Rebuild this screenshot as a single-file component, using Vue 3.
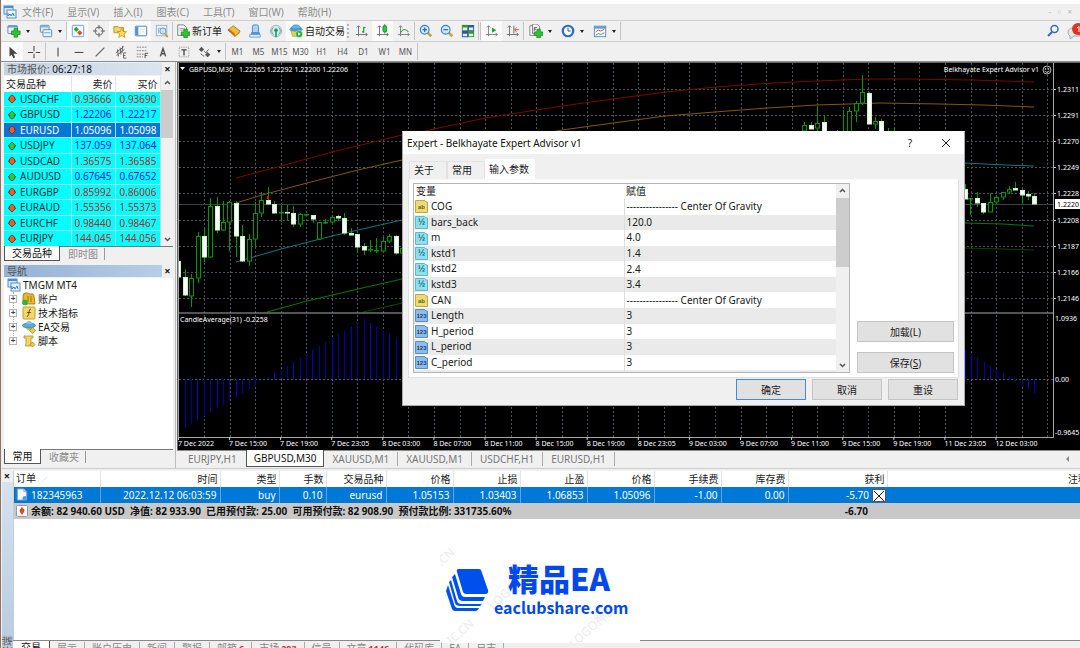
<script setup>
const menus = ['文件(F)', '显示(V)', '插入(I)', '图表(C)', '工具(T)', '窗口(W)', '帮助(H)']
const mainTools = [
  { i: 'newchart', drop: true }, { i: 'profiles', drop: true }, { sep: true },
  { i: 'market', on: true }, { i: 'cross' }, { i: 'star', on: true }, { i: 'navi', on: true }, { i: 'tester' }, { sep: true },
  { i: 'order', label: '新订单' }, { i: 'gold' }, { i: 'vps' }, { i: 'signal' },
  { i: 'auto', label: '自动交易', on: true }, { grip: true },
  { i: 'bars' }, { i: 'candles', on: true }, { i: 'line' }, { sep: true },
  { i: 'zoomin' }, { i: 'zoomout' }, { i: 'tile' }, { sep: true }, { sep: true },
  { i: 'scroll', on: true }, { i: 'shift' }, { sep: true },
  { i: 'indi', drop: true }, { i: 'clock', drop: true }, { i: 'template', drop: true }
]
const lineTools = [
  { i: 'cursor', on: true }, { i: 'plus' }, { sep: true }, { i: 'vline' }, { i: 'hline' }, { i: 'diag' },
  { i: 'channel' }, { i: 'fibo' }, { i: 'texta' }, { i: 'textt' }, { i: 'arrows', drop: true }
]
const frames = ['M1', 'M5', 'M15', 'M30', 'H1', 'H4', 'D1', 'W1', 'MN']
const quotes = [
  ['USDCHF', '0.93666', '0.93690', 0], ['GBPUSD', '1.22206', '1.22217', 1],
  ['EURUSD', '1.05096', '1.05098', 0], ['USDJPY', '137.059', '137.064', 1],
  ['USDCAD', '1.36575', '1.36585', 0], ['AUDUSD', '0.67645', '0.67652', 1],
  ['EURGBP', '0.85992', '0.86006', 0], ['EURAUD', '1.55356', '1.55373', 0],
  ['EURCHF', '0.98440', '0.98467', 0], ['EURJPY', '144.045', '144.056', 0]
]
const tree = [['acc', '账户'], ['func', '技术指标'], ['ea', 'EA交易'], ['script', '脚本']]
const chartTabs = ['EURJPY,H1', 'GBPUSD,M30', 'XAUUSD,M1', 'XAUUSD,M1', 'USDCHF,H1', 'EURUSD,H1']
const params = [
  ['ab', 'COG', '---------------- Center Of Gravity'], ['v2', 'bars_back', '120.0'], ['v2', 'm', '4.0'],
  ['v2', 'kstd1', '1.4'], ['v2', 'kstd2', '2.4'], ['v2', 'kstd3', '3.4'],
  ['ab', 'CAN', '---------------- Center Of Gravity'], ['n3', 'Length', '3'], ['n3', 'H_period', '3'],
  ['n3', 'L_period', '3'], ['n3', 'C_period', '3'], ['ab', '', '']
]
const glyphs = { ab: 'ab', v2: '½', n3: '123' }
const heads = ['订单', '时间', '类型', '手数', '交易品种', '价格', '止损', '止盈', '价格', '手续费', '库存费', '获利', '注释']
const order = ['182345963', '2022.12.12 06:03:59', 'buy', '0.10', 'eurusd', '1.05153', '1.03403', '1.06853', '1.05096', '-1.00', '0.00', '-5.70']
const bottomTabs = [['交易'], ['展示'], ['账户历史'], ['新闻'], ['警报'], ['邮箱', '6'], ['市场', '203'], ['信号'], ['文章', '1146'], ['代码库'], ['EA'], ['日志']]

const gridX = Array.from({ length: 34 }, (_, k) => Math.round(204 + 25.55 * k) + 0.5)
const gridY = Array.from({ length: 9 }, (_, k) => Math.round(89 + 26.1 * k) + 0.5)
const prices = ['1.2311', '1.2291', '1.2270', '1.2249', '1.2228', '1.2208', '1.2187', '1.2166', '1.2146']
const times = ['7 Dec 2022', '7 Dec 15:00', '7 Dec 19:00', '7 Dec 23:05', '8 Dec 03:00', '8 Dec 07:00', '8 Dec 11:00', '8 Dec 15:00', '8 Dec 19:00', '8 Dec 23:05', '9 Dec 03:00', '9 Dec 07:00', '9 Dec 11:00', '9 Dec 15:00', '9 Dec 19:00', '11 Dec 23:05', '12 Dec 03:00']

// high, body top, body bottom, low, falling
const early = [
  [560, 602, 652, 660, 1], [628, 652, 706, 708, 1], [642, 654, 709, 740, 0], [516, 527, 655, 668, 0], [502, 528, 590, 606, 1],
  [414, 437, 590, 590, 0], [412, 437, 511, 520, 1], [424, 486, 511, 514, 0], [424, 426, 486, 572, 0], [422, 428, 527, 592, 1],
  [495, 527, 602, 606, 1], [522, 538, 602, 617, 0], [427, 460, 538, 562, 0], [397, 420, 460, 470, 0], [380, 420, 433, 435, 1],
  [423, 433, 459, 463, 1], [434, 455, 459, 486, 0], [435, 455, 460, 479, 1], [439, 460, 492, 502, 1], [460, 463, 493, 500, 0],
  [461, 463, 466, 469, 0], [465, 465, 477, 490, 1], [486, 487, 538, 540, 0], [478, 485, 488, 493, 0], [464, 470, 487, 488, 0],
  [465, 469, 475, 482, 1], [459, 474, 520, 525, 1], [505, 519, 524, 526, 1], [522, 523, 560, 580, 1], [549, 559, 569, 585, 1],
  [540, 567, 570, 575, 0], [533, 569, 572, 579, 0], [530, 542, 572, 579, 0], [523, 529, 542, 549, 0], [526, 528, 580, 586, 1],
  [560, 565, 580, 582, 0]
].map((c, i) => [10 + 19.17 * i - 1545, ...c])
const late = [
  [343, 186, 196, 212, 216, 0], [362, 185, 196, 207, 208, 1], [382, 137, 190, 205, 212, 0], [401, 166, 187, 216, 220, 1],
  [441, 209, 214, 216, 220, 0], [459, 150, 214, 216, 220, 0], [478, 140, 152, 216, 220, 0], [497, 122, 128, 152, 186, 0],
  [517, 46, 97, 130, 135, 0], [536, 96, 98, 191, 192, 1], [555, 172, 182, 192, 207, 0], [574, 178, 182, 216, 220, 1],
  [593, 204, 214, 216, 220, 0], [612, 205, 214, 216, 220, 0], [824, 372, 387, 416, 418, 1], [841, 414, 414, 416, 465, 0],
  [861, 396, 415, 430, 441, 1], [880, 429, 429, 455, 462, 1], [900, 399, 427, 455, 456, 0], [919, 407, 412, 427, 433, 0],
  [938, 397, 397, 412, 419, 0], [957, 378, 388, 397, 403, 0], [976, 366, 385, 390, 391, 1], [995, 386, 389, 404, 430, 1],
  [1014, 394, 403, 408, 421, 1], [1033, 400, 409, 432, 433, 1]
]
const candles = [...early, ...late].map(([x, h, t, b, l, f]) => {
  const y = v => Math.round(60 + v / 3)
  return { x: Math.round(690 + x / 3), h: y(h), t: y(t), b: Math.max(y(b), y(t) + 1), l: y(l), f }
})
const hist = [
  ...[395, 383, 371, 359, 348, 335, 324, 314, 302, 291, 278, 266, 254, 244, 232, 220, 209, 197, 185, 173, 162, 150, 138, 127, 115, 103, 93, 81, 69, 57, 69, 81, 92, 103, 115]
    .map((v, i) => [Math.round(178.3 + 6.39 * i), 300 + v / 3]),
  ...[270, 282, 293, 305, 317, 328, 340, 351, 364, 375, 387, 399].map((v, i) => [Math.round(964.6 + 6.34 * i), 260 + v / 3])
]
const curves = [
  ['#7c0606', '236,178 281,166 332,152 402,135 425,131 485,118 562,106 613,99 665,92 716,87 773,83 817,81 868,79 907,79 973,80 1034,82'],
  ['#875706', '236,203 262,195 307,183 358,170 402,160 562,130 613,123 665,116 715,112 767,108 817,105 880,103 940,104 983,105 1034,107'],
  ['#0a7a80', '236,262 281,249 332,236 402,220'], ['#0a7a80', '964,163 1005,165 1034,166'],
  ['#067806', '267,312 307,301 358,289 402,279'], ['#067806', '964,223 1003,224 1034,226'],
  ['#064806', '363,312 402,303'], ['#064806', '964,248 1003,249 1034,250']
]
</script>

<template>
  <div class="app">
    <svg class="sprite" aria-hidden="true">
      <symbol id="logo" viewBox="0 0 14 14"><rect x="1" y="1" width="9" height="8" fill="#d4e9fb" stroke="#4d8fca" /><path d="M1 2h9" stroke="#4d8fca" stroke-width="2" /><rect x="4" y="5" width="9" height="8" fill="#eaf5ff" stroke="#4d8fca" /><path d="M5 8v3l2-2 1 2 2-3 1 3" fill="none" stroke="#3a78bb" /></symbol>
      <symbol id="newchart" viewBox="0 0 16 16"><rect x="1" y="2" width="11" height="9" rx="1" fill="#e6f2fb" stroke="#4f7fae" /><path d="M1 3h11" stroke="#5c9bd5" stroke-width="2" /><path d="M8 5h4v3h3v4h-3v3H8v-3H5V8h3z" fill="#2fc42f" stroke="#14861a" stroke-width=".8" /></symbol>
      <symbol id="profiles" viewBox="0 0 16 16"><rect x="1.500" y="1.500" width="10" height="8" rx="1" fill="#deeefc" stroke="#4f83b8" /><path d="M2 3h9" stroke="#7eb3e3" stroke-width="2" /><rect x="4.500" y="6.500" width="10" height="8" rx="1" fill="#e7f3fd" stroke="#4f83b8" /><path d="M6 10h7" stroke="#5d9bd3" /></symbol>
      <symbol id="market" viewBox="0 0 16 16"><rect x="1.500" y="1.500" width="13" height="13" rx="1" fill="#f5fafe" stroke="#5b9bd2" /><path d="M6 3l3 3-3 3-3-3z" fill="#29a638" /><path d="M10 7l3 3-3 3-3-3z" fill="#ea4a20" /></symbol>
      <symbol id="cross" viewBox="0 0 16 16"><circle cx="8" cy="8" r="4.500" fill="none" stroke="#777" stroke-width="1.300" /><path d="M8 1v5M8 10v5M1 8h5M10 8h5" stroke="#666" stroke-width="1.200" /></symbol>
      <symbol id="star" viewBox="0 0 16 16"><path d="M1 3h5l1 1h5v6H1z" fill="#f7d470" stroke="#be8c1f" /><path d="M10 5l1.600 3.500 4 .3-3 2.500 1 4-3.600-2.200-3.500 2.200 1-4-3-2.500 4-.3z" fill="#ffe14d" stroke="#b98511" stroke-width=".8" /></symbol>
      <symbol id="navi" viewBox="0 0 16 16"><rect x="1.500" y="2.500" width="13" height="11" rx="1" fill="#fff" stroke="#3e73ad" /><path d="M3.500 3v10" stroke="#5f93c8" stroke-width="3" /><path d="M7 6h5M7 9h5" stroke="#d5d5d5" /></symbol>
      <symbol id="tester" viewBox="0 0 16 16"><rect x="1.500" y="1.500" width="12" height="12" fill="#eef4fa" stroke="#8bacc9" /><path d="M3 5h9M4 11V6M7 11V8" stroke="#88aeca" /><circle cx="9" cy="8" r="3.500" fill="#c5e2f8" stroke="#6b91b2" /><path d="M11.500 11l3 4" stroke="#cf9d25" stroke-width="2" /></symbol>
      <symbol id="order" viewBox="0 0 16 16"><path d="M2 1h7l3 3v9H2z" fill="#f7f7f7" stroke="#747474" /><path d="M4 5h6M4 7h6" stroke="#999" /><path d="M9 6h4v3h3v4h-3v3H9v-3H6V9h3z" fill="#2fc42f" stroke="#14861a" stroke-width=".8" /></symbol>
      <symbol id="gold" viewBox="0 0 16 16"><path d="M1 7l6-5 8 6-6 6z" fill="#f1bd3d" stroke="#9a6410" stroke-width=".8" /><path d="M1 7l8 7v-3L2 5z" fill="#b87714" /><path d="M15 8v2l-6 5v-2z" fill="#d9952a" /></symbol>
      <symbol id="vps" viewBox="0 0 16 16"><rect x="5" y="1" width="7" height="9" rx="2" fill="#a9d3f7" stroke="#3e82c8" /><path d="M4 9h9l1 3H3z" fill="#4f92d4" /><path d="M2 12h12v3H2z" fill="#dceafa" stroke="#699bd0" /></symbol>
      <symbol id="signal" viewBox="0 0 16 16"><circle cx="8" cy="8" r="6.500" fill="#d3e8ef" stroke="#8fb8ba" /><path d="M5 4a5 5 0 0 0 0 8M11 4a5 5 0 0 1 0 8" fill="none" stroke="#5e9cb8" /><circle cx="8" cy="7" r="2" fill="#1f9b3f" /><path d="M8 8v7" stroke="#29a94a" stroke-width="2" /></symbol>
      <symbol id="auto" viewBox="0 0 16 16"><path d="M2 7h12l-3 7H4z" fill="#f2d149" stroke="#b38c19" stroke-width=".7" /><ellipse cx="8" cy="6" rx="7.500" ry="2.800" fill="#4f9fd0" /><path d="M3 5q0-4 5-4t5 4q-5 2-10 0" fill="#6bb4de" stroke="#2e78a8" stroke-width=".7" /><circle cx="11.500" cy="11.500" r="4" fill="#24ae32" stroke="#fff" stroke-width=".5" /><path d="M10.300 9.500l3.200 2-3.200 2z" fill="#fff" /></symbol>
      <symbol id="bars" viewBox="0 0 16 16"><path d="M4 2v12M1 12h13M2 4l2-2 2 2M12 10l2 2-2 2" fill="none" stroke="#666" /><path d="M10 3v7M8 9h2M10 4h2" stroke="#159a24" stroke-width="1.300" /></symbol>
      <symbol id="candles" viewBox="0 0 16 16"><path d="M4 2v12M1 12h13M2 4l2-2 2 2M12 10l2 2-2 2" fill="none" stroke="#666" /><path d="M10 0v11" stroke="#1b9b2a" /><rect x="8" y="2" width="4" height="7" rx="1" fill="#2dcf3f" stroke="#128a20" /></symbol>
      <symbol id="line" viewBox="0 0 16 16"><path d="M4 2v12M1 12h13M2 4l2-2 2 2M12 10l2 2-2 2" fill="none" stroke="#777" /><path d="M4 10q4-7 9-1" fill="none" stroke="#35a044" stroke-width="1.200" /></symbol>
      <symbol id="zoomin" viewBox="0 0 16 16"><path d="M9 9l5 5" stroke="#d0a030" stroke-width="3" /><circle cx="6.500" cy="6.500" r="5" fill="#cde8fc" stroke="#3c83c7" stroke-width="1.300" /><path d="M4 6.500h5M6.500 4v5" stroke="#2a68b0" stroke-width="1.400" /></symbol>
      <symbol id="zoomout" viewBox="0 0 16 16"><path d="M9 9l5 5" stroke="#d0a030" stroke-width="3" /><circle cx="6.500" cy="6.500" r="5" fill="#cde8fc" stroke="#3c83c7" stroke-width="1.300" /><path d="M4 6.500h5" stroke="#2a68b0" stroke-width="1.400" /></symbol>
      <symbol id="tile" viewBox="0 0 16 16"><path d="M1 1h7v7H1z" fill="#38922e" /><path d="M8 1h7v7H8zM1 8h7v7H1z" fill="#2c58ad" /><path d="M8 8h7v7H8z" fill="#38922e" /><path d="M2 4h5v3H2zM9 4h5v3H9zM2 11h5v3H2zM9 11h5v3H9z" fill="#dcefff" /></symbol>
      <symbol id="scroll" viewBox="0 0 16 16"><path d="M4 2v12M1 12h13M2 4l2-2 2 2M12 10l2 2-2 2" fill="none" stroke="#777" /><path d="M8 4l5 3-5 3z" fill="#21a632" /></symbol>
      <symbol id="shift" viewBox="0 0 16 16"><path d="M4 2v12M1 12h13M2 4l2-2 2 2M12 10l2 2-2 2M9 2v9" fill="none" stroke="#666" /><path d="M10 6.500h5M12 4l-2 2.500 2 2.500" stroke="#c84b27" fill="none" /></symbol>
      <symbol id="indi" viewBox="0 0 16 16"><path d="M1 2h8v11H1z" fill="#fff" stroke="#777" /><path d="M4 0h5l3 3v8H4z" fill="#f3f3f3" stroke="#777" /><path d="M6 8V4h3M6 6h2" fill="none" stroke="#555" /><path d="M9 6h4v3h3v4h-3v3H9v-3H6V9h3z" fill="#2fc42f" stroke="#14861a" stroke-width=".8" /></symbol>
      <symbol id="clock" viewBox="0 0 16 16"><circle cx="8" cy="8" r="6" fill="#f3f8fd" stroke="#2470bd" stroke-width="2.500" /><path d="M8 4v4h3" stroke="#444" fill="none" /></symbol>
      <symbol id="template" viewBox="0 0 16 16"><rect x="1.500" y="2.500" width="13" height="12" fill="#f7fbff" stroke="#4b84ba" /><path d="M1 4h14" stroke="#5898d4" stroke-width="2.500" /><path d="M3 9l3-2 3 1 4-2" fill="none" stroke="#bd5433" /><path d="M3 13l3-2 3 1 4-2" fill="none" stroke="#3c9a48" /></symbol>
      <symbol id="cursor" viewBox="0 0 16 16"><path d="M4 2v11l2.500-2 2 4 2-1-2-4H13z" fill="#444" /></symbol>
      <symbol id="plus" viewBox="0 0 16 16"><path d="M8 1v6M8 10v5M1 8.500h6M10 8.500h5" stroke="#444" stroke-width="1.200" /></symbol>
      <symbol id="vline" viewBox="0 0 16 16"><path d="M8 3v10" stroke="#444" stroke-width="1.200" /></symbol>
      <symbol id="hline" viewBox="0 0 16 16"><path d="M3 8.500h10" stroke="#444" stroke-width="1.200" /></symbol>
      <symbol id="diag" viewBox="0 0 16 16"><path d="M3 13L13 3" stroke="#555" stroke-width="1.200" /></symbol>
      <symbol id="channel" viewBox="0 0 16 16"><path d="M2 9l9-7M3 12l9-7M4 5l1 8M7 3l1 8M10 1l-1 8" stroke="#555" /><path d="M11 9v6h3M11 9h3M11 12h2" fill="none" stroke="#555" /></symbol>
      <symbol id="fibo" viewBox="0 0 16 16"><path d="M2 2.500h12M2 6.500h12M2 10.500h8M2 13.500h7" stroke="#777" stroke-dasharray="2 1" /><path d="M11.500 15V9.500H15M11.500 12H14" fill="none" stroke="#444" /></symbol>
      <symbol id="texta" viewBox="0 0 16 16"><path d="M5 13l3-9 3 9M6 10h4" fill="none" stroke="#555" stroke-width="1.700" /></symbol>
      <symbol id="textt" viewBox="0 0 16 16"><rect x="2.500" y="2.500" width="11" height="11" fill="none" stroke="#888" stroke-dasharray="1 1" /><path d="M5 5.500h6M8 5v7" stroke="#444" stroke-width="1.500" /></symbol>
      <symbol id="arrows" viewBox="0 0 16 16"><path d="M4 2l3 3-3 3-3-3z" fill="#555" /><path d="M7 7l2 2 3-4M3 10l4 3" fill="none" stroke="#555" /><path d="M11 8l3 3-3 3-3-3z" fill="#555" /></symbol>
      <symbol id="up" viewBox="0 0 10 10"><path d="M5 1l4 4H7.500v2L5 9 2.500 7V5H1z" fill="#2fc73f" stroke="#11602a" /></symbol>
      <symbol id="down" viewBox="0 0 10 10"><path d="M5 9L1 5h1.500V3L5 1l2.500 2v2H9z" fill="#f4592b" stroke="#8a3219" /></symbol>
      <symbol id="acc" viewBox="0 0 14 14"><path d="M1 12V4q0-3 3-3t4 1q4-1 4 2l1 8z" fill="#e9b92b" stroke="#967010" stroke-width=".8" /><path d="M6 4v6M9 4v6" stroke="#a3780f" /><circle cx="3" cy="10.500" r="2.800" fill="#32b53b" /></symbol>
      <symbol id="func" viewBox="0 0 14 14"><rect x="1" y="1" width="12" height="12" rx="1" fill="#f5d768" stroke="#c19d30" /><path d="M9 3Q7 3 7 6T5 11M5 6.500h4" fill="none" stroke="#675422" /></symbol>
      <symbol id="ea" viewBox="0 0 14 14"><path d="M3 6h8l-2 4H5z" fill="#e6c03a" /><ellipse cx="7" cy="5.500" rx="6.500" ry="2.500" fill="#5ca8d8" stroke="#2e77a8" stroke-width=".7" /><path d="M4 4q0-3 3-3t3 3" fill="#83c2e7" /><path d="M10.500 7.500l3 3-3 3-3-3z" fill="#f1ca45" stroke="#9a7715" stroke-width=".7" /></symbol>
      <symbol id="script" viewBox="0 0 14 14"><path d="M2 2h9v2H9v8H3l1-2V4H2z" fill="#f4d563" stroke="#b08d23" stroke-width=".8" /><path d="M10.500 8l2.500 2.500-2.500 2.500L8 10.500z" fill="#f1ca45" stroke="#9a7715" stroke-width=".7" /></symbol>
      <symbol id="page" viewBox="0 0 12 14"><path d="M1 1h7l3 3v9H1z" fill="#f4f7fa" stroke="#8fa2b5" /><path d="M8 1v3h3" fill="none" stroke="#8fa2b5" /><circle cx="9" cy="11" r="2.500" fill="#49a3df" /></symbol>
    </svg>

    <div class="topstrip"></div>
    <nav class="menubar">
      <svg class="ic"><use href="#logo" /></svg>
      <button v-for="m in menus" :key="m">{{ m }}</button>
      <span class="mdi">-&nbsp; ▫&nbsp; ×</span>
    </nav>
    <div class="toolbar main-tools">
      <template v-for="(t, k) in mainTools" :key="k">
        <i v-if="t.sep" class="sep"></i><i v-else-if="t.grip" class="grip"></i>
        <button v-else :class="{ on: t.on, wide: t.label, drop: t.drop }" :aria-label="t.label || t.i">
          <svg class="ic"><use :href="'#' + t.i" /></svg><span v-if="t.label">{{ t.label }}</span><i v-if="t.drop" class="caret"></i>
        </button>
      </template>
      <i class="sep"></i>
      <div class="right">
        <svg width="14" height="14" viewBox="0 0 14 14"><circle cx="8.500" cy="5" r="3.500" fill="#f4f8ff" stroke="#3569c0" stroke-width="1.500" /><path d="M6 8l-4 4" stroke="#3569c0" stroke-width="2" /></svg>
        <svg width="13" height="18" viewBox="0 0 13 18"><path d="M1 10q0-4 6-4h6v8H7l-4 3v-3q-2-1-2-4" fill="#e6e6e6" stroke="#aaa" /><circle cx="11" cy="7" r="6" fill="#e33224" /><path d="M10 6l2-1.500V10" fill="none" stroke="#fff" /></svg>
      </div>
    </div>
    <div class="toolbar line-tools">
      <template v-for="(t, k) in lineTools" :key="k">
        <i v-if="t.sep" class="sep"></i>
        <button v-else :class="{ on: t.on, drop: t.drop }" :aria-label="t.i"><svg class="ic"><use :href="'#' + t.i" /></svg><i v-if="t.drop" class="caret"></i></button>
      </template>
      <i class="sep"></i>
      <button v-for="f in frames" :key="f" class="tf" :class="{ on: f === 'M30' }">{{ f }}</button>
      <i class="sep"></i>
    </div>

    <div class="middle">
      <aside class="side">
        <header class="cap"><h2>市场报价: <b>06:27:18</b></h2><button aria-label="关闭">×</button></header>
        <div class="market">
          <table>
            <colgroup><col class="c1"><col class="c2"><col class="c3"></colgroup>
            <thead><tr><th>交易品种</th><th>卖价</th><th>买价</th></tr></thead>
            <tbody>
              <tr v-for="q in quotes" :key="q[0]" :class="{ up: q[3], sel: q[0] === 'EURUSD' }">
                <td><svg width="10" height="10"><use :href="q[3] ? '#up' : '#down'" /></svg>{{ q[0] }}</td><td>{{ q[1] }}</td><td>{{ q[2] }}</td>
              </tr>
            </tbody>
          </table>
          <div class="vscroll"><svg width="13" height="14" viewBox="0 0 13 14"><path d="M4 8l2.500-2.500L9 8" /></svg><div class="thumb"></div><svg width="13" height="14" viewBox="0 0 13 14"><path d="M4 6l2.500 2.500L9 6" /></svg></div>
        </div>
        <div class="tabs"><button class="active w55">交易品种</button><button>即时图</button></div>
        <header class="cap nav"><h2>导航</h2><button aria-label="关闭">×</button></header>
        <ul class="tree">
          <li class="root"><svg class="ic"><use href="#logo" /></svg>TMGM MT4</li>
          <li v-for="t in tree" :key="t[0]"><i class="box">+</i><svg class="ic"><use :href="'#' + t[0]" /></svg>{{ t[1] }}</li>
        </ul>
        <div class="tabs"><button class="active w36">常用</button><button>收藏夹</button></div>
      </aside>

      <main class="work">
        <svg class="chart" viewBox="177 62 903 388" preserveAspectRatio="xMinYMin slice">
          <rect x="177" y="62" width="903" height="388" fill="#000" />
          <g stroke="#4a545c" stroke-dasharray="2 2" fill="none">
            <path v-for="x in gridX" :key="x" :d="`M${x} 63V437`" />
            <path v-for="y in gridY" :key="y" :d="`M179 ${y}H1053`" />
            <path d="M179 379.500H1053" />
          </g>
          <path d="M179 204.500H1053" stroke="#39434a" />
          <polyline v-for="(c, k) in curves" :key="k" :points="c[1]" :stroke="c[0]" fill="none" />
          <g v-for="(c, k) in candles" :key="'c' + k">
            <path :d="`M${c.x + .5} ${c.h}V${c.l}`" stroke="#009a00" />
            <rect :x="c.x - 1.500" :y="c.t + .5" width="4" :height="c.b - c.t - .5" :fill="c.f ? '#fff' : '#000'" :stroke="c.f ? '#c8f4c8' : '#009a00'" />
          </g>
          <path d="M267 196h2v3h-2z" fill="#e00" />
          <path v-for="(h, k) in hist" :key="'h' + k" :d="`M${h[0] + .5} 379V${Math.round(h[1])}`" :stroke="k % 3 ? '#0000a8' : '#0000d8'" />
          <path d="M177 62.500H1080M177.500 62V450" stroke="#666" />
          <path d="M178.500 63V437.500H1053.500V63M179 313H1053" stroke="#a8a8a8" fill="none" />
          <path v-for="(p, k) in prices" :key="p" :d="`M1054 ${gridY[k]}h2`" stroke="#ccc" />
          <path v-for="(t, k) in times" :key="t" :d="`M${k ? 229.500 + (k - 1) * 51.100 : 178.500} 437v3`" stroke="#ccc" />
          <rect x="1055" y="199" width="25" height="10" fill="#fff" />
          <g class="ct">
            <path d="M180 67h5l-2.500 3z" />
            <text x="189" y="72">GBPUSD,M30</text><text x="239" y="72">1.22265 1.22292 1.22200 1.22206</text>
            <text x="1039" y="72" text-anchor="end">Belkhayate Expert Advisor v1</text>
            <text x="180" y="322">CandleAverage(31) -0.2258</text>
            <text v-for="(p, k) in prices" :key="p" x="1057" :y="92 + k * 26.100">{{ p }}</text>
            <text x="1057" y="207" class="now">1.2220</text>
            <text x="1055" y="321">1.0936</text><text x="1055" y="382">0.00</text><text x="1055" y="435">-0.9645</text>
            <text v-for="(t, k) in times" :key="t" :x="k ? 229 + (k - 1) * 51.100 : 178" y="446">{{ t }}</text>
          </g>
          <g fill="none" stroke="#ddd" stroke-width=".8"><circle cx="1047" cy="70" r="4" /><circle cx="1045.500" cy="69" r=".6" /><circle cx="1048.500" cy="69" r=".6" /><path d="M1044.500 71q2.500 3 5 0" /></g>
        </svg>
        <div class="ctabs"><button v-for="(t, k) in chartTabs" :key="k" :class="{ active: k === 1 }">{{ t }}</button><i class="larrow"></i></div>
      </main>
    </div>

    <section class="terminal">
      <div class="rail"><button aria-label="关闭">×</button><div class="railcap"><span>终端</span></div></div>
      <div class="tbody">
        <div class="orders">
          <table>
            <colgroup><col v-for="n in 13" :key="n" :class="'o' + n"></colgroup>
            <thead><tr><th v-for="(h, k) in heads" :key="k">{{ h }}<small v-if="!k">∕</small></th></tr></thead>
            <tbody>
              <tr class="sel"><td v-for="(o, k) in order" :key="k"><svg v-if="!k" width="12" height="13"><use href="#page" /></svg>{{ o }}<button v-if="k === 11" aria-label="平仓"><svg width="12" height="12" viewBox="0 0 12 12"><path d="M1 1l10 10M11 1L1 11" stroke="#222" fill="none" /></svg></button></td><td></td></tr>
              <tr class="sum"><td colspan="11"><svg class="bal" width="12" height="12" viewBox="0 0 12 12"><rect x=".5" y=".5" width="11" height="11" rx="1" fill="#fff" stroke="#999" /><path d="M6 2l3 3.500h-1V7L6 10 4 7V5.500H3z" fill="#d9481f" /></svg>余额: 82 940.60 USD&nbsp; 净值: 82 933.90&nbsp; 已用预付款: 25.00&nbsp; 可用预付款: 82 908.90&nbsp; 预付款比例: 331735.60%</td><td>-6.70</td><td></td></tr>
            </tbody>
          </table>
        </div>
        <div class="btabs"><button v-for="(t, k) in bottomTabs" :key="t[0]" :class="{ active: !k }">{{ t[0] }}<b v-if="t[1]">{{ t[1] }}</b></button></div>
      </div>
      <div class="brand">
        <span class="wm w1">.CN</span><span class="wm w2">LOGO</span><span class="wm w3">IC.CN</span><span class="wm w4">LOGO神器</span>
        <svg width="43" height="44" viewBox="0 0 43 44"><g fill="#0050ee"><path d="M13 1h20q1 0 2 1l7 20q1 4-3 4H20q-2 0-3-2L11 4q-1-3 2-3" /><path d="M6 9l3-3 6 20q1 3 4 3h20l-2 4H17q-4 0-5-4z" /><path d="M3 14l2-2 6 21q1 3 4 3h21l-2 2H14q-4 0-5-3z" /><path d="M1 20l1-3 6 19q1 4 4 4h21q-1 3-3 3H9q-2 0-3-2L0 23z" /></g></svg>
        <div class="btext"><strong>精品EA</strong><em>eaclubshare.com</em></div>
      </div>
    </section>

    <div class="dialog" role="dialog" aria-label="Expert - Belkhayate Expert Advisor v1">
      <header><h1>Expert - Belkhayate Expert Advisor v1</h1><button aria-label="帮助">?</button><button aria-label="关闭"><svg width="10" height="10" viewBox="0 0 10 10"><path d="M1 1l8 8M9 1L1 9" stroke="#222" fill="none" /></svg></button></header>
      <div class="dtabs"><button>关于</button><button>常用</button><button class="active">输入参数</button></div>
      <div class="pane">
        <div class="list">
          <table>
            <colgroup><col class="p1"><col></colgroup>
            <thead><tr><th>变量</th><th>赋值</th></tr></thead>
            <tbody>
              <tr v-for="(p, k) in params" :key="k"><td><svg width="13" height="13" viewBox="0 0 13 13" :class="p[0]"><path d="M.5.500h9L11 2h1.500v10.500H.5z" /><text x="6.500" y="9" text-anchor="middle">{{ glyphs[p[0]] }}</text></svg>{{ p[1] }}</td><td>{{ p[2] }}</td></tr>
            </tbody>
          </table>
          <div class="vscroll"><svg width="13" height="14" viewBox="0 0 13 14"><path d="M4 8l2.500-2.500L9 8" /></svg><div class="thumb"></div><svg width="13" height="14" viewBox="0 0 13 14"><path d="M4 6l2.500 2.500L9 6" /></svg></div>
        </div>
        <div class="act"><button>加载(L)</button><button>保存(<u>S</u>)</button></div>
      </div>
      <footer><button class="ok">确定</button><button>取消</button><button>重设</button></footer>
    </div>
  </div>
</template>

<style>
body { margin: 0; overflow: hidden; }
</style>
<style scoped>
.app { position: relative; box-sizing: border-box; height: 100vh; overflow: hidden; display: flex; flex-direction: column; background: #f0f0f0; border-left: 1px solid #8d7263; font: 10px/14px "Noto Sans", "Noto Sans CJK SC", sans-serif; color: #1a1a1a; }
.app *, .app *::before { box-sizing: border-box; }
.sprite { display: none; }
button { font: inherit; color: inherit; background: none; border: 0; padding: 0; margin: 0; white-space: nowrap; }
h1, h2 { font: inherit; margin: 0; }
.ic { width: 14px; height: 14px; flex: none; display: block; }
.topstrip { height: 4px; background: #fff; flex: none; }
.menubar { height: 16px; flex: none; display: flex; align-items: center; gap: 14px; padding-left: 2px; color: #8c8c8c; }
.menubar .ic { margin-right: -9px; }
.mdi { margin-left: auto; padding-right: 8px; color: #b5b5b5; font-size: 8px; }
.toolbar { height: 21px; flex: none; display: flex; align-items: stretch; border-top: 1px solid #cfcfcf; padding-left: 1px; }
.line-tools { border-bottom: 1px solid #8c8c8c; }
.toolbar button { width: 21px; display: flex; align-items: center; justify-content: center; gap: 2px; flex: none; }
.toolbar .drop { width: 32px; gap: 5px; }
.toolbar .wide { width: auto; padding: 0 1px 0 3px; }
.toolbar .on { background: #fafafa; }
.line-tools .drop { width: 30px; }
.toolbar .tf { font-size: 8px; color: #555; }
.sep { width: 1px; flex: none; background: #c4c4c4; margin: 1px 0; }
.sep + .sep { margin-left: 1px; }
.line-tools .sep { margin: 1px; }
.grip { width: 3px; margin: 3px 1px; border-left: 2px dotted #b5b5b5; flex: none; }
.caret { border: 2px solid transparent; border-top: 3px solid #222; border-bottom: 0; }
.right { margin-left: auto; display: flex; align-items: center; gap: 7px; }
.middle { flex: 1; min-height: 0; display: flex; }
.side { width: 175px; flex: none; padding: 0 2px 4px 3px; display: flex; flex-direction: column; border-right: 1px solid #bbb; }
.cap { height: 14px; flex: none; display: flex; align-items: center; }
.cap h2 { flex: 1; height: 12px; line-height: 12px; padding-left: 3px; background: linear-gradient(90deg, #c3d1e0, #dce5ef); color: #555; }
.cap h2 b { font-weight: 400; color: #111; }
.cap button { width: 11px; line-height: 12px; font-size: 11px; font-weight: 700; }
.cap.nav { margin-top: 3px; }
.cap.nav h2 { background: linear-gradient(90deg, #93b1d4, #b7cee7); }
.market { display: flex; height: 170px; overflow: hidden; flex: none; background: #f0f0f0; }
table { border-collapse: collapse; table-layout: fixed; }
th, td { padding: 0; font-weight: 400; text-align: right; white-space: nowrap; line-height: 13px; }
th:first-child, td:first-child { text-align: left; }
td svg { display: inline-block; vertical-align: middle; }
.market table { width: 156px; height: 171px; }
.market thead tr { height: 16px; }
.c1 { width: 67px; } .c2 { width: 44px; } .c3 { width: 45px; }
.market th { background: #fff; border-right: 1px solid #e4e4e4; padding: 0 2px; }
.market td { background: #00ffff; color: #b42a2a; border-bottom: 1px solid #9fe8e8; border-right: 1px solid #9fe8e8; padding: 0 3px 0 2px; }
.market td:first-child { color: #052c34; }
.market td svg { margin: -2px 3px 0 1px; }
.market .up td + td { color: #1414e8; }
.market .sel td, .market .sel td:first-child { background: #0078d7; color: #fff; }
.vscroll { width: 13px; flex: none; display: flex; flex-direction: column; background: #f0f0f0; }
.vscroll svg { flex: none; fill: none; stroke: #555; stroke-width: 1.5; }
.vscroll .thumb { background: #cdcdcd; height: 48px; }
.vscroll svg:last-child { margin-top: auto; }
.tabs { height: 15px; flex: none; display: flex; border-top: 1px solid #777; }
.tabs button { height: 12px; line-height: 12px; margin-top: 1px; padding: 0 6px 0 8px; color: #8c8c8c; border-right: 1px solid #999; }
.tabs .active { height: 15px; line-height: 14px; margin-top: -1px; padding: 0; color: #111; background: #fff; border: 1px solid #555; border-top: 0; }
.w55 { width: 56px; } .w36 { width: 37px; }
.tree { flex: 1; margin: 0; padding: 0 0 0 2px; list-style: none; background: #fff; position: relative; }
.tree::before { content: ""; position: absolute; left: 9px; top: 14px; height: 48px; border-left: 1px dotted #aaa; }
.tree li { height: 14px; display: flex; align-items: center; gap: 2px; padding-left: 3px; position: relative; }
.tree .root { padding-left: 1px; }
.box { width: 8px; height: 8px; margin-right: 3px; border: 1px solid #b5b5b5; background: #fff; font: 700 8px/5px "Liberation Sans", sans-serif; color: #345; text-align: center; }
.work { flex: 1; min-width: 0; display: flex; flex-direction: column; margin-left: 1px; }
.chart { flex: 1; min-height: 0; width: 100%; display: block; background: #000; }
.ct { font-size: 7px; fill: #fff; }
.now { fill: #000; }
.ctabs { height: 18px; flex: none; display: flex; border-top: 1px solid #8a8a8a; color: #777; align-items: flex-start; }
.ctabs button { height: 14px; margin-top: 1px; line-height: 14px; padding: 0 8px; border-right: 1px solid #aaa; }
.ctabs button:first-child { padding: 0 9px 0 11px; border: 0; }
.ctabs .active { margin-top: -1px; height: 17px; line-height: 17px; padding: 0 7px; color: #111; background: #fff; border: 1px solid #555; border-top: 0; }
.larrow { margin: 5px 11px 0 auto; border: 3px solid transparent; border-right-color: #888; border-left: 0; }
.terminal { position: relative; height: 180px; flex: none; display: flex; border-top: 1px solid #ccc; }
.rail { width: 12px; flex: none; display: flex; flex-direction: column; }
.rail button { height: 13px; line-height: 13px; font-size: 11px; font-weight: 700; }
.railcap { flex: 1; margin-left: 1px; background: linear-gradient(#d5e2ef, #b7cbe0); display: flex; align-items: flex-end; }
.railcap span { writing-mode: vertical-rl; text-orientation: sideways; transform: rotate(180deg); line-height: 11px; margin-bottom: -8px; color: #555; }
.tbody { flex: 1; min-width: 0; padding-top: 2px; display: flex; flex-direction: column; }
.orders { flex: 1; min-height: 0; background: #fff; border-left: 1px solid #ccc; overflow: hidden; }
.orders table { width: calc(100% + 8px); }
.orders tr { height: 16px; }
.orders th { border-right: 1px solid #e4e4e4; padding: 0 2px; }
.orders th:last-child { border: 0; padding: 0; }
.orders td { padding: 0 3px; border-right: 1px solid #58a8e8; }
.orders td:first-child, .orders th:first-child { padding-left: 2px; }
.orders small { font-size: 6px; color: #aaa; margin-left: 5px; }
.orders .sel { background: #0078d7; color: #fff; }
.orders td svg { margin: -2px 3px 0 0; }
.orders td button { width: 14px; height: 13px; margin: 0 0 0 3px; background: #fff; border: 1px solid #555; vertical-align: top; overflow: hidden; line-height: 11px; }
.orders td button svg { margin: 0; display: block; }
.orders .sel td:nth-child(12) { padding-right: 1px; }
.orders .sel td:nth-child(n+12), .orders .sum td { border: 0; }
.orders .sum { background: #c8c8c8; color: #111; }
.orders .sum td { font-weight: 700; }
.orders .sum td:nth-child(2) { padding-right: 19px; }
.o1 { width: 86px; } .o2 { width: 120px; } .o3 { width: 59px; } .o4 { width: 47px; } .o5 { width: 60px; }
.o6, .o7, .o8, .o9, .o10, .o11 { width: 67px; } .o12 { width: 99px; }
.btabs { height: 8px; flex: none; display: flex; align-items: flex-start; border-top: 1px solid #888; overflow: hidden; color: #888; }
.btabs button { height: 12px; margin-top: 1px; line-height: 12px; border-right: 1px solid #aaa; padding: 0 7px; flex: none; }
.btabs .active { background: #fff; color: #111; margin-top: -1px; line-height: 14px; height: 14px; width: 37px; border-right-color: #555; }
.btabs b { color: #e8202c; font-size: 9px; margin-left: 2px; }
.brand { position: absolute; left: 439px; width: 200px; top: 72px; height: 102px; background: #fff; padding: 27px 0 0 6px; display: flex; overflow: hidden; align-items: flex-start; }
.brand svg, .btext { position: relative; }
.btext { margin: -9px 0 0 5px; color: #0048ee; font-family: "Noto Sans CJK SC", sans-serif; font-weight: 700; display: flex; flex-direction: column; }
.btext strong { font-size: 31px; line-height: 38px; padding-left: 14px; }
.btext em { font-style: normal; font-size: 16px; line-height: 21px; }
.wm { position: absolute; transform: rotate(-42deg); color: #ebebeb; font-size: 12px; }
.w1 { left: -4px; top: 9px; } .w2 { left: 46px; top: 48px; } .w3 { left: 5px; top: 84px; } .w4 { left: 124px; top: 78px; }
.dialog { position: absolute; left: 401px; top: 131px; width: 563px; background: #f0f0f0; border: 1px solid #aaa; border-top-color: #fff; display: flex; flex-direction: column; }
.dialog header { height: 22px; background: #fff; display: flex; align-items: center; padding-left: 4px; }
.dialog header h1 { flex: 1; color: #111; }
.dialog header button { width: 36px; display: flex; justify-content: center; }
.dtabs { display: flex; align-items: flex-end; height: 25px; padding: 5px 0 0 6px; }
.dtabs button { height: 18px; line-height: 17px; width: 38px; text-align: left; padding-left: 4px; border: 1px solid #e2e2e2; border-bottom: 0; }
.dtabs .active { height: 20px; width: 50px; line-height: 19px; background: #fff; border: 0; }
.pane { margin: 0 5px; background: #fff; border: 1px solid #e0e0e0; border-top-color: #f8f8f8; padding: 3px 4px 4px; display: flex; justify-content: space-between; height: 199px; }
.list { width: 437px; height: 190px; border: 1px solid #b5b5b5; display: flex; overflow: hidden; }
.list table { width: 422px; height: 202px; }
.list thead tr { height: 15px; }
.p1 { width: 210px; }
.list th, .list td { text-align: left; padding: 0 2px; }
.list td svg { margin: -1px 3px 0 -1px; }
.list td:first-child { border-right: 1px solid #ddd; }
.list tbody tr:nth-child(even) { background: #eaeaea; }
.list .vscroll { height: 188px; }
.list .vscroll .thumb { height: 69px; }
.list td svg text { font: 700 6px "Liberation Sans", sans-serif; }
.ab path { fill: #eadb75; stroke: #bda93c; } .ab text { fill: #6d5c16; }
.v2 path { fill: #91dfec; stroke: #5bb9c9; } .v2 text { fill: #16717f; }
.list td .v2 text { font-size: 9px; }
.n3 path { fill: #8ebce8; stroke: #5b8dc2; } .n3 text { fill: #10427c; }
.act { width: 97px; display: flex; flex-direction: column; justify-content: flex-end; gap: 10px; }
.act button, footer button { height: 21px; background: #e1e1e1; border: 1px solid #c4c4c4; }
footer { display: flex; justify-content: flex-end; gap: 6px; padding: 1px 6px 5px; }
footer button { width: 70px; }
footer .ok { border: 1px solid #3c8fd6; }
</style>
